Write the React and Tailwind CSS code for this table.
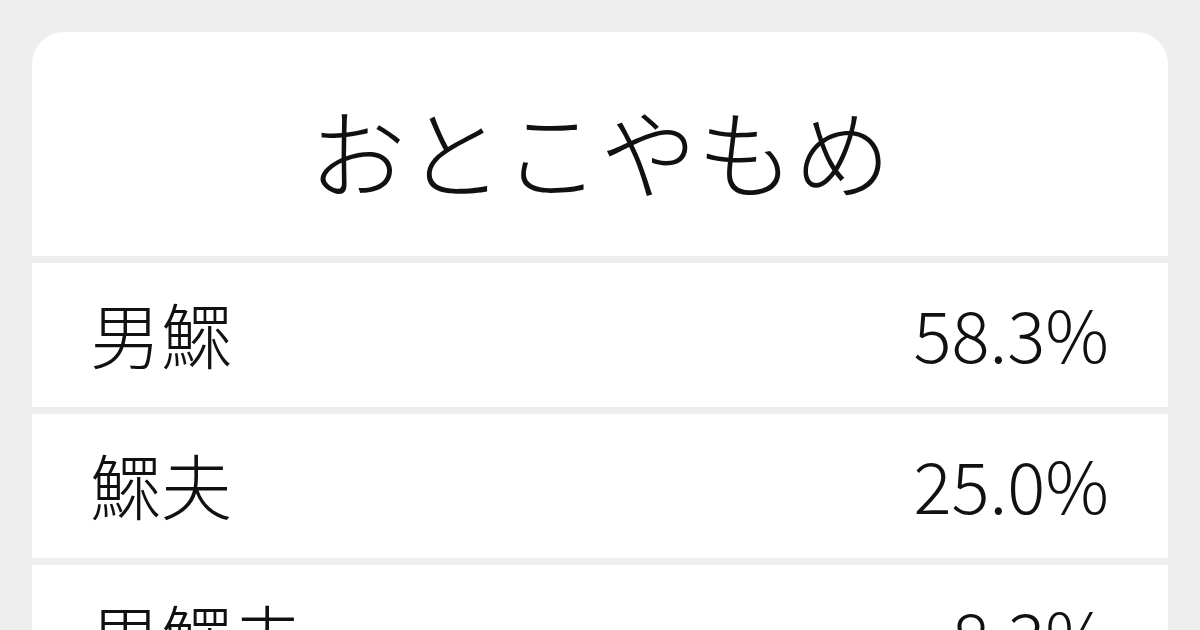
import React from 'react';

const rows = [
  { word: '男鰥', pct: '58.3%' },
  { word: '鰥夫', pct: '25.0%' },
  { word: '男鰥夫', pct: '8.3%' },
];

const App = () => {
  return (
    <div
      className="w-[1200px] h-[630px] overflow-hidden bg-[#eeeeee] pt-8 px-8 text-[#111111]"
      style={{ fontFamily: '"Noto Sans CJK JP", "Noto Sans", sans-serif' }}
    >
      <div className="flex flex-col gap-[7px] rounded-t-[32px] overflow-hidden">
        <div className="h-[224px] bg-white flex items-center justify-center pt-2">
          <h1 className="text-[97px] font-light leading-none">おとこやもめ</h1>
        </div>
        {rows.map((row) => (
          <div
            key={row.word}
            className="h-[144px] bg-white flex items-center justify-between pl-[58px] pr-[59px] pb-[5px]"
          >
            <span className="text-[71px] font-light leading-none">{row.word}</span>
            <span className="text-[71px] font-light leading-none">{row.pct}</span>
          </div>
        ))}
      </div>
    </div>
  );
};

export default App;
